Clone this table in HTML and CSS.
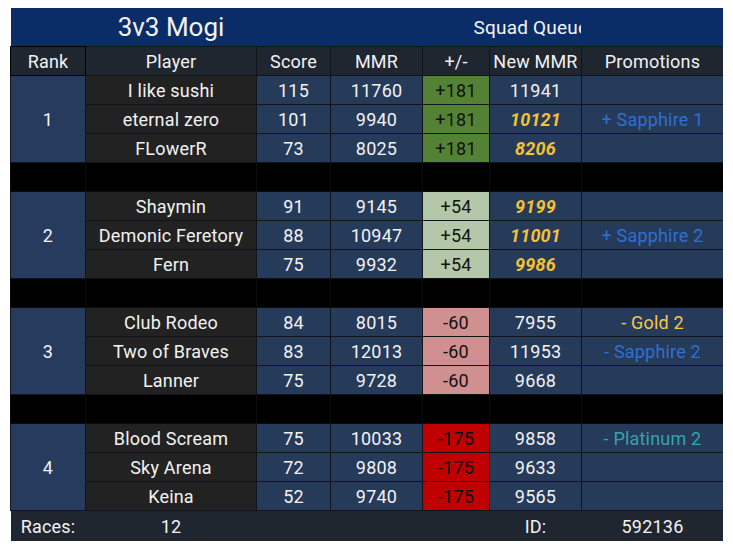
FILE: index.html
```html
<!DOCTYPE html>
<html>
<head>
<meta charset="utf-8">
<link rel="stylesheet" href="styles.css">
</head>
<body>
<table class="mogi">
  <colgroup>
    <col class="c-rank"><col class="c-player"><col class="c-score"><col class="c-mmr"><col class="c-diff"><col class="c-new"><col class="c-promo">
  </colgroup>
  <tr class="title-row">
    <td></td>
    <td class="title-main">3v3 Mogi</td>
    <td></td><td></td>
    <td colspan="2" class="title-sub"><div class="clip">Squad Queue</div></td>
    <td></td>
  </tr>
  <tr class="head-row">
    <th>Rank</th><th>Player</th><th>Score</th><th>MMR</th><th>+/-</th><th>New MMR</th><th>Promotions</th>
  </tr>

  <tr><td class="rank" rowspan="3">1</td><td class="player">I like sushi</td><td>115</td><td>11760</td><td class="d-green">+181</td><td>11941</td><td></td></tr>
  <tr><td class="player">eternal zero</td><td>101</td><td>9940</td><td class="d-green">+181</td><td class="peak">10121</td><td class="p-sapphire">+ Sapphire 1</td></tr>
  <tr><td class="player">FLowerR</td><td>73</td><td>8025</td><td class="d-green">+181</td><td class="peak">8206</td><td></td></tr>
  <tr class="gap"><td></td><td></td><td></td><td></td><td></td><td></td><td></td></tr>

  <tr><td class="rank" rowspan="3">2</td><td class="player">Shaymin</td><td>91</td><td>9145</td><td class="d-lgreen">+54</td><td class="peak">9199</td><td></td></tr>
  <tr><td class="player">Demonic Feretory</td><td>88</td><td>10947</td><td class="d-lgreen">+54</td><td class="peak">11001</td><td class="p-sapphire">+ Sapphire 2</td></tr>
  <tr><td class="player">Fern</td><td>75</td><td>9932</td><td class="d-lgreen">+54</td><td class="peak">9986</td><td></td></tr>
  <tr class="gap"><td></td><td></td><td></td><td></td><td></td><td></td><td></td></tr>

  <tr><td class="rank" rowspan="3">3</td><td class="player">Club Rodeo</td><td>84</td><td>8015</td><td class="d-lred">-60</td><td>7955</td><td class="p-gold">- Gold 2</td></tr>
  <tr><td class="player">Two of Braves</td><td>83</td><td>12013</td><td class="d-lred">-60</td><td>11953</td><td class="p-sapphire">- Sapphire 2</td></tr>
  <tr><td class="player">Lanner</td><td>75</td><td>9728</td><td class="d-lred">-60</td><td>9668</td><td></td></tr>
  <tr class="gap"><td></td><td></td><td></td><td></td><td></td><td></td><td></td></tr>

  <tr><td class="rank" rowspan="3">4</td><td class="player">Blood Scream</td><td>75</td><td>10033</td><td class="d-red">-175</td><td>9858</td><td class="p-plat">- Platinum 2</td></tr>
  <tr><td class="player">Sky Arena</td><td>72</td><td>9808</td><td class="d-red">-175</td><td>9633</td><td></td></tr>
  <tr><td class="player">Keina</td><td>52</td><td>9740</td><td class="d-red">-175</td><td>9565</td><td></td></tr>

  <tr class="foot-row">
    <td>Races:</td><td>12</td><td></td><td></td><td></td><td>ID:</td><td>592136</td>
  </tr>
</table>
</body>
</html>
```

FILE: styles.css
```css
html, body {
  background: #ffffff;
}
body {
  margin: 8px 10px;
  font-family: Roboto, "Noto Sans", sans-serif;
}
.mogi {
  border-collapse: collapse;
  table-layout: fixed;
  width: 713px;
  color: #f2f2f2;
  font-size: 18px;
  letter-spacing: 0.2px;
}
.c-rank { width: 75px; }
.c-player { width: 171px; }
.c-score { width: 74px; }
.c-mmr { width: 92px; }
.c-diff { width: 67px; }
.c-new { width: 92px; }
.c-promo { width: 142px; }

.mogi td, .mogi th {
  padding: 0;
  text-align: center;
  font-weight: 400;
  white-space: nowrap;
  overflow: hidden;
  border: 1px solid #111418;
  background: #263a5a;
  height: 28px;
}
.title-row td {
  background: #0a2d68;
  border: none;
  height: 38px;
  overflow: visible;
}
.title-main {
  font-size: 26px;
  letter-spacing: 0;
}
.title-sub {
  font-size: 19px;
  text-align: left !important;
}
.title-sub .clip {
  width: 107px;
  margin-left: 51px;
  overflow: hidden;
  white-space: nowrap;
}
.head-row th {
  background: #1f262f;
  height: 28px;
}
.head-row th:first-child {
  border-color: #000;
}
.mogi td.rank {
  background: #263b5d;
}
.mogi td.player {
  background: #222222;
}
.gap td {
  background: #000;
  border-color: #0c0c0c;
  height: 28px;
}
.mogi td.d-green { background: #548235; color: #111; }
.mogi td.d-lgreen { background: #b4c7a8; color: #111; }
.mogi td.d-lred { background: #d09090; color: #111; }
.mogi td.d-red { background: #c00000; color: #111; }
.peak {
  color: #f4c232;
  font-weight: 700 !important;
  font-style: italic;
}
.p-sapphire { color: #2f6fd2; }
.p-gold { color: #f2c94c; }
.p-plat { color: #35a2ad; }

.foot-row td {
  background: #1f262f;
  border: none;
  height: 30px;
}
```
